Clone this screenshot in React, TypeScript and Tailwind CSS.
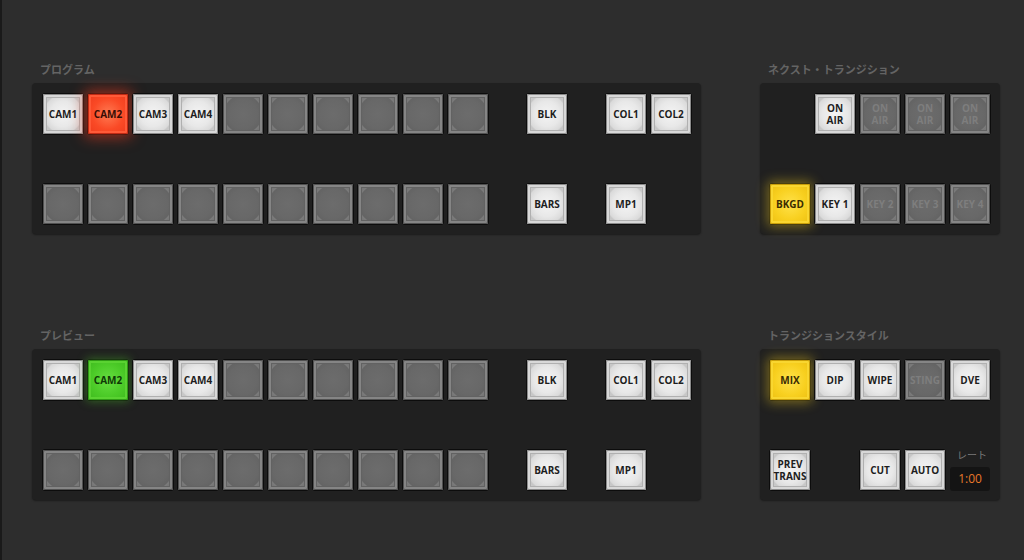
import React from "react";

type Variant = "white" | "gray" | "dim" | "red" | "green" | "yellow" | "empty";

const variantClass: Record<Variant, string> = {
  white:
    "bg-[radial-gradient(circle_at_50%_50%,#f4f4f4_0%,#e8e8e8_45%,#dadada_66%,#c6c6c6_71%,#d2d2d2_100%)] text-[#1e1e1e] shadow-[inset_0_0_0_1px_#8a8a8a,inset_0_0_0_3px_#d8d8d8,inset_0_0_0_4px_#b0b0b0]",
  gray:
    "bg-[radial-gradient(circle_at_50%_50%,#6c6c6c_0%,#686868_50%,#646464_66%,#7a7a7a_70%,#6a6a6a_100%)] shadow-[inset_0_0_0_1px_#505050,inset_0_0_0_3px_#858585,inset_0_0_0_4px_#626262]",
  dim:
    "bg-[radial-gradient(circle_at_50%_50%,#6c6c6c_0%,#686868_50%,#646464_66%,#7a7a7a_70%,#6a6a6a_100%)] text-[#7e7e7e] shadow-[inset_0_0_0_1px_#505050,inset_0_0_0_3px_#858585,inset_0_0_0_4px_#626262]",
  red:
    "bg-[radial-gradient(circle_at_50%_50%,#ff7a52_0%,#fa4a26_55%,#ee3a1c_100%)] text-[#3a0d05] shadow-[inset_0_0_0_1px_#c22a14,inset_0_0_0_3px_#ff5a38,0_0_14px_4px_rgba(255,60,30,0.5)]",
  green:
    "bg-[radial-gradient(circle_at_50%_50%,#66de40_0%,#4ccb28_55%,#3cb81c_100%)] text-[#0f3a06] shadow-[inset_0_0_0_1px_#2e9a14,inset_0_0_0_3px_#5ad232,0_0_10px_2px_rgba(80,210,40,0.35)]",
  yellow:
    "bg-[radial-gradient(circle_at_50%_50%,#ffe24a_0%,#f8d020_55%,#ecbe10_100%)] text-[#3a2c02] shadow-[inset_0_0_0_1px_#c99e08,inset_0_0_0_3px_#f9d630,0_0_12px_3px_rgba(250,210,30,0.4)]",
  empty: "",
};

function Btn({ label, v = "white" }: { label?: string; v?: Variant }) {
  if (v === "empty") return <div className="w-[42px] h-[42px] shrink-0" />;
  return (
    <div className="w-[42px] h-[42px] shrink-0 rounded-[3px] border border-[#0c0c0c] bg-[#0c0c0c]">
      <div
        className={`w-full h-full rounded-[2px] flex items-center justify-center text-center text-[10px] leading-[12px] font-bold whitespace-pre ${variantClass[v]}`}
      >
        {label}
      </div>
    </div>
  );
}

const cams = ["CAM1", "CAM2", "CAM3", "CAM4"];

function BusPanel({ active }: { active: "red" | "green" }) {
  return (
    <div className="w-[669px] h-[151px] rounded-[4px] bg-[#202020] shadow-[0_1px_2px_rgba(0,0,0,0.4)] flex flex-col justify-between pl-[10px] pt-[10px] pb-[9px]">
      <div className="flex">
        <div className="flex gap-[3px]">
          {cams.map((c, i) => (
            <Btn key={c} label={c} v={i === 1 ? active : "white"} />
          ))}
          {Array.from({ length: 6 }).map((_, i) => (
            <Btn key={i} v="gray" />
          ))}
        </div>
        <div className="ml-[37px]">
          <Btn label="BLK" />
        </div>
        <div className="ml-[37px] flex gap-[3px]">
          <Btn label="COL1" />
          <Btn label="COL2" />
        </div>
      </div>
      <div className="flex">
        <div className="flex gap-[3px]">
          {Array.from({ length: 10 }).map((_, i) => (
            <Btn key={i} v="gray" />
          ))}
        </div>
        <div className="ml-[37px]">
          <Btn label="BARS" />
        </div>
        <div className="ml-[37px]">
          <Btn label="MP1" />
        </div>
      </div>
    </div>
  );
}

function Label({ text }: { text: string }) {
  return (
    <div className="h-[21px] pl-[8px] pt-[1px] text-[11px] leading-[14px] font-bold text-[#646464]">
      {text}
    </div>
  );
}

function SidePanel({ children }: { children: React.ReactNode }) {
  return (
    <div className="w-[240px] h-[151px] rounded-[4px] bg-[#202020] shadow-[0_1px_2px_rgba(0,0,0,0.4)] flex flex-col justify-between pl-[9px] pt-[10px] pb-[9px]">
      {children}
    </div>
  );
}

export default function App() {
  return (
    <div
      className="w-[1024px] h-[560px] bg-[#2d2d2d] border-l-2 border-[#1a1a1a] overflow-hidden pl-[30px] pt-[62px] flex flex-col gap-[94px]"
      style={{ fontFamily: '"Open Sans", "Noto Sans CJK JP", sans-serif' }}
    >
      <div className="flex gap-[59px]">
        <div>
          <Label text="プログラム" />
          <BusPanel active="red" />
        </div>
        <div>
          <Label text="ネクスト・トランジション" />
          <SidePanel>
            <div className="flex gap-[3px]">
              <Btn v="empty" />
              <Btn label={"ON\nAIR"} />
              <Btn label={"ON\nAIR"} v="dim" />
              <Btn label={"ON\nAIR"} v="dim" />
              <Btn label={"ON\nAIR"} v="dim" />
            </div>
            <div className="flex gap-[3px]">
              <Btn label="BKGD" v="yellow" />
              <Btn label="KEY 1" />
              <Btn label="KEY 2" v="dim" />
              <Btn label="KEY 3" v="dim" />
              <Btn label="KEY 4" v="dim" />
            </div>
          </SidePanel>
        </div>
      </div>
      <div className="flex gap-[59px]">
        <div>
          <Label text="プレビュー" />
          <BusPanel active="green" />
        </div>
        <div>
          <Label text="トランジションスタイル" />
          <SidePanel>
            <div className="flex gap-[3px]">
              <Btn label="MIX" v="yellow" />
              <Btn label="DIP" />
              <Btn label="WIPE" />
              <Btn label="STING" v="dim" />
              <Btn label="DVE" />
            </div>
            <div className="flex gap-[3px]">
              <Btn label={"PREV\nTRANS"} />
              <Btn v="empty" />
              <Btn label="CUT" />
              <Btn label="AUTO" />
              <div className="w-[42px] h-[42px] flex flex-col items-center justify-between">
                <div className="text-[10px] leading-[12px] text-[#7a7a7a] pl-[4px]">レート</div>
                <div className="w-[40px] h-[24px] rounded-[3px] bg-[#141414] flex items-center justify-center text-[12px] text-[#e8782a]">
                  1:00
                </div>
              </div>
            </div>
          </SidePanel>
        </div>
      </div>
    </div>
  );
}
